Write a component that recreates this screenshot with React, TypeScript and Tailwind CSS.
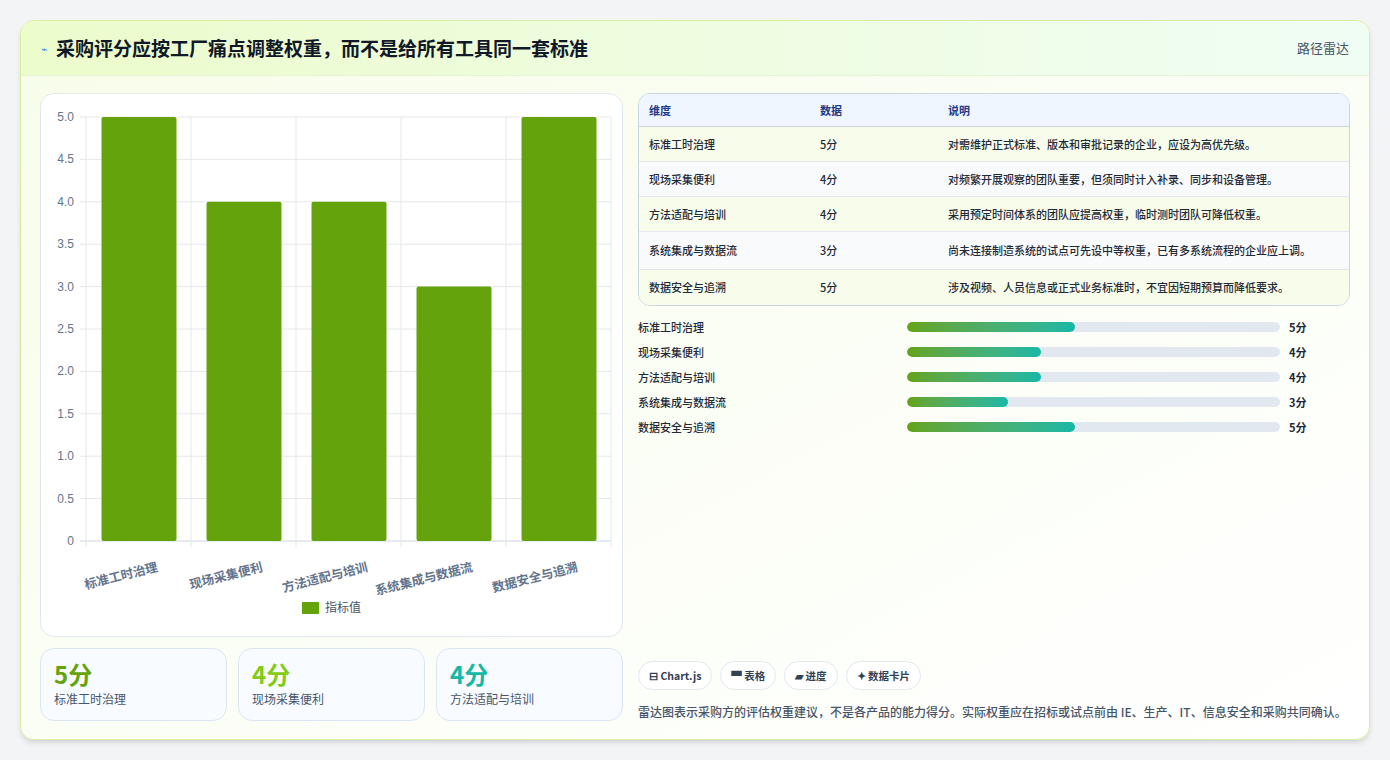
import React from "react";

const rows = [
  ["标准工时治理", 5, "对需维护正式标准、版本和审批记录的企业，应设为高优先级。"],
  ["现场采集便利", 4, "对频繁开展观察的团队重要，但须同时计入补录、同步和设备管理。"],
  ["方法适配与培训", 4, "采用预定时间体系的团队应提高权重，临时测时团队可降低权重。"],
  ["系统集成与数据流", 3, "尚未连接制造系统的试点可先设中等权重，已有多系统流程的企业应上调。"],
  ["数据安全与追溯", 5, "涉及视频、人员信息或正式业务标准时，不宜因短期预算而降低要求。"],
] as const;

function Chart() {
  const W = 582, H = 543;
  const x0 = 45, x1 = 570, y0 = 23, y1 = 447;
  const cw = (x1 - x0) / 5;
  const ticks = ["5.0", "4.5", "4.0", "3.5", "3.0", "2.5", "2.0", "1.5", "1.0", "0.5", "0"];
  return (
    <svg width={W} height={H} className="block">
      {ticks.map((t, i) => {
        const y = y0 + ((y1 - y0) / 10) * i;
        return (
          <g key={t}>
            <line x1={x0 - 6} x2={x1} y1={y} y2={y} stroke={i === 10 ? "#cbd5e1" : "#e5e7eb"} />
            <text x={x0 - 12} y={y + 4} textAnchor="end" fontSize="12" fill="#64748b" fontFamily="Liberation Sans, sans-serif">{t}</text>
          </g>
        );
      })}
      {[0, 1, 2, 3, 4, 5].map((i) => (
        <line key={i} x1={x0 + cw * i} x2={x0 + cw * i} y1={y0} y2={y1 + 6} stroke="#e5e7eb" />
      ))}
      {rows.map((r, i) => {
        const h = ((y1 - y0) / 5) * r[1];
        const cx = x0 + cw * i + cw / 2;
        return (
          <g key={i}>
            <rect x={cx - 37} y={y1 - h} width={75} height={h} rx={2} fill="#65a30d" />
            <text x={cx + 20} y={y1 + 30} textAnchor="end" fontSize="12.5" fontWeight="bold" fill="#64748b" transform={`rotate(-14 ${cx + 20} ${y1 + 30})`} fontFamily="Noto Sans CJK SC, sans-serif">{r[0]}</text>
          </g>
        );
      })}
      <rect x={261} y={508} width={17} height={12} fill="#65a30d" />
      <text x={284} y={518} fontSize="12" fill="#475569" fontFamily="Noto Sans CJK SC, sans-serif">指标值</text>
    </svg>
  );
}

export default function App() {
  const stats = [
    ["5分", "标准工时治理", "text-[#65a30d]"],
    ["4分", "现场采集便利", "text-[#84cc16]"],
    ["4分", "方法适配与培训", "text-[#14b8a6]"],
  ];
  return (
    <div className="w-[1390px] h-[760px] bg-[#f3f4f6] pt-[20px] pl-[20px]" style={{ fontFamily: '"Noto Sans CJK SC", "Noto Sans", sans-serif' }}>
      <div className="w-[1350px] h-[720px] rounded-[14px] border border-[#d9f0a3] bg-gradient-to-br from-[#f7fdea] to-[#ffffff] overflow-hidden shadow-md flex flex-col">
        <div className="h-[55px] shrink-0 flex items-center justify-between px-5 bg-gradient-to-r from-[#ecfccb] to-[#f0fdf4] border-b border-[#e5f3d0]">
          <div className="flex items-center gap-2">
            <span className="text-[#3b82f6] text-[11px]">⌁</span>
            <span className="text-[19px] font-bold text-[#111827]">采购评分应按工厂痛点调整权重，而不是给所有工具同一套标准</span>
          </div>
          <span className="text-[13px] text-[#475569]">路径雷达</span>
        </div>
        <div className="flex-1 flex gap-[15px] px-[19px] pt-[17px]">
          <div className="w-[583px] flex flex-col gap-[11px]">
            <div className="h-[544px] rounded-[14px] border border-[#e2e8f0] bg-white">
              <Chart />
            </div>
            <div className="flex gap-[11px]">
              {stats.map(([v, l, c]) => (
                <div key={l} className="flex-1 h-[73px] rounded-[14px] border border-[#dbe6f3] bg-[#f8fbff] px-[13px] pt-[10px]">
                  <div className={`text-[24px] font-bold leading-[30px] ${c}`}>{v}</div>
                  <div className="text-[12px] text-[#475569] mt-[1px]">{l}</div>
                </div>
              ))}
            </div>
          </div>
          <div className="w-[713px] flex flex-col">
            <div className="rounded-[12px] border border-[#cbd5e1] overflow-hidden">
              <div className="h-[33px] flex items-center bg-[#eff6ff] border-b border-[#cbd5e1] text-[11px] font-bold text-[#1e3a8a] px-[10px]">
                <div className="w-[171px]">维度</div>
                <div className="w-[128px]">数据</div>
                <div>说明</div>
              </div>
              {rows.map((r, i) => (
                <div key={i} className={`flex px-[10px] text-[11px] font-medium text-[#1f2937] ${i < 4 ? "border-b border-[#e2e8f0]" : ""} ${i % 2 === 0 ? "bg-[#f7fdea]" : "bg-[#f8fafc]"} ${i === 3 ? "py-[10px]" : "h-[35px] items-center"}`}>
                  <div className="w-[171px] shrink-0">{r[0]}</div>
                  <div className="w-[128px] shrink-0">{r[1]}分</div>
                  <div className="w-[380px] leading-[17px]">{r[2]}</div>
                </div>
              ))}
            </div>
            <div className="flex flex-col gap-[7px] mt-[12px]">
              {rows.map((r, i) => (
                <div key={i} className="flex items-center h-[18px] text-[11px] font-medium text-[#1f2937]">
                  <div className="w-[269px]">{r[0]}</div>
                  <div className="w-[373px] h-[10px] rounded-full bg-[#e2e8f0] overflow-hidden">
                    <div className="h-full rounded-full bg-gradient-to-r from-[#65a30d] to-[#14b8a6]" style={{ width: `${r[1] * 9}%` }} />
                  </div>
                  <div className="ml-[9px] font-bold">{r[1]}分</div>
                </div>
              ))}
            </div>
            <div className="flex-1" />
            <div className="flex gap-[8px] mb-[12px]">
              {["⊟ Chart.js", "▀ 表格", "▰ 进度", "✦ 数据卡片"].map((t) => (
                <div key={t} className="h-[29px] px-[10px] rounded-full border border-[#e2e8f0] bg-white flex items-center text-[10.5px] font-bold text-[#334155]">{t}</div>
              ))}
            </div>
            <div className="text-[12px] leading-[20px] text-[#475569] font-medium mb-[17px]">雷达图表示采购方的评估权重建议，不是各产品的能力得分。实际权重应在招标或试点前由 IE、生产、IT、信息安全和采购共同确认。</div>
          </div>
        </div>
      </div>
    </div>
  );
}
